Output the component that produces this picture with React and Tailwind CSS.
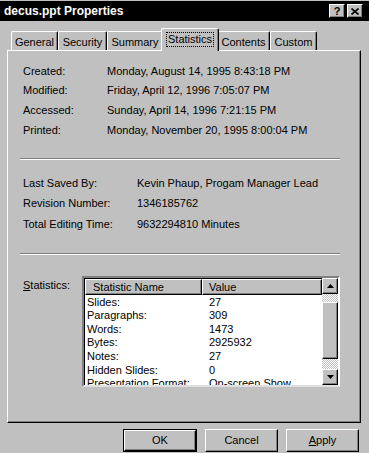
const raised =
  "border-t border-l border-r border-b border-t-white border-l-white border-r-black border-b-black shadow-[inset_-1px_-1px_0_#808080]";

function TitleBtn({ children }) {
  return (
    <div className={`w-[16px] h-[14px] bg-[#c0c0c0] flex items-center justify-center ${raised}`}>
      {children}
    </div>
  );
}

function Tab({ label, width, selected }) {
  if (selected) {
    return (
      <div
        className="relative z-10 -mx-[2px] -mb-[1px] h-[23px] bg-[#c0c0c0] border-t border-l border-r border-t-white border-l-white border-r-black rounded-t-[2px] shadow-[inset_-1px_0_0_#808080] flex items-start justify-center pt-[4px]"
        style={{ width: width + 4 }}
      >
        <span className="outline outline-1 outline-dotted outline-black px-[1px] leading-[13px]">{label}</span>
      </div>
    );
  }
  return (
    <div
      className="h-[19px] bg-[#c0c0c0] border-t border-l border-r border-t-white border-l-white border-r-black rounded-t-[2px] shadow-[inset_-1px_0_0_#808080] flex items-start justify-center pt-[4px]"
      style={{ width }}
    >
      <span className="leading-[13px]">{label}</span>
    </div>
  );
}

function Row({ label, value, labelW, h }) {
  return (
    <div className="flex items-center" style={{ height: h }}>
      <div style={{ width: labelW }}>{label}</div>
      <div>{value}</div>
    </div>
  );
}

function Separator() {
  return <div className="ml-[12px] w-[320px] h-[2px] border-t border-t-[#808080] border-b border-b-white" />;
}

function Arrow({ up }) {
  return (
    <svg width="7" height="4" viewBox="0 0 7 4">
      {up ? <polygon points="3.5,0 7,4 0,4" fill="#000" /> : <polygon points="0,0 7,0 3.5,4" fill="#000" />}
    </svg>
  );
}

function Button({ children, primary }) {
  const inner = (
    <div className={`w-full h-full bg-[#c0c0c0] flex items-center justify-center ${raised}`}>{children}</div>
  );
  if (primary) {
    return <div className="w-[74px] h-[23px] border border-black">{inner}</div>;
  }
  return <div className="w-[73px] h-[23px]">{inner}</div>;
}

const stats = [
  ["Slides:", "27"],
  ["Paragraphs:", "309"],
  ["Words:", "1473"],
  ["Bytes:", "2925932"],
  ["Notes:", "27"],
  ["Hidden Slides:", "0"],
  ["Presentation Format:", "On-screen Show"],
];

export default function App() {
  return (
    <div className="w-[369px] h-[453px] bg-[#c0c0c0] overflow-hidden text-black text-[11px] font-['Liberation_Sans',Arial,sans-serif]">
      {/* title bar */}
      <div className="mt-[1px] h-[20px] bg-black flex items-center justify-between pl-[4px] pr-[6px]">
        <span className="text-white font-bold text-[12px] leading-none">decus.ppt Properties</span>
        <div className="flex gap-[2px]">
          <TitleBtn>
            <span className="font-bold text-[11px] leading-none">?</span>
          </TitleBtn>
          <TitleBtn>
            <svg width="8" height="7" viewBox="0 0 8 7">
              <path d="M0.5 0.5 L7.5 6.5 M7.5 0.5 L0.5 6.5" stroke="#000" strokeWidth="1.6" />
            </svg>
          </TitleBtn>
        </div>
      </div>

      {/* tabs */}
      <div className="mt-[7px] h-[22px] flex items-end pl-[11px]">
        <Tab label="General" width={47} />
        <Tab label="Security" width={49} />
        <Tab label="Summary" width={56} />
        <Tab label="Statistics" width={54} selected />
        <Tab label="Contents" width={53} />
        <Tab label="Custom" width={47} />
      </div>

      {/* panel */}
      <div className="ml-[7px] w-[354px] h-[373px] border-t border-l border-r border-b border-t-white border-l-white border-r-black border-b-black shadow-[inset_-1px_-1px_0_#808080]">
        <div className="pt-[10px] pl-[15px]">
          <Row label="Created:" value="Monday, August 14, 1995 8:43:18 PM" labelW={84} h={19.7} />
          <Row label="Modified:" value="Friday, April 12, 1996 7:05:07 PM" labelW={84} h={19.7} />
          <Row label="Accessed:" value="Sunday, April 14, 1996 7:21:15 PM" labelW={84} h={19.7} />
          <Row label="Printed:" value="Monday, November 20, 1995 8:00:04 PM" labelW={84} h={19.7} />
        </div>
        <div className="mt-[18px]">
          <Separator />
        </div>
        <div className="mt-[13px] pl-[15px]">
          <Row label="Last Saved By:" value="Kevin Phaup, Progam Manager Lead" labelW={114} h={20.5} />
          <Row label="Revision Number:" value="1346185762" labelW={114} h={20.5} />
          <Row label="Total Editing Time:" value="9632294810 Minutes" labelW={114} h={20.5} />
        </div>
        <div className="mt-[19px]">
          <Separator />
        </div>

        <div className="mt-[21px] flex pl-[15px]">
          <div className="w-[59px] pt-[1px]">
            <span className="underline">S</span>tatistics:
          </div>
          <div className="w-[258px] h-[111px] border-2 border-t-[#808080] border-l-[#808080] border-r-white border-b-[#dfdfdf] shadow-[inset_1px_1px_0_#000] flex bg-white">
            <div className="w-[238px] flex flex-col pl-[1px] pt-[1px] overflow-hidden">
              <div className="flex h-[16px] shrink-0">
                <div className={`w-[117px] h-full bg-[#c0c0c0] pl-[7px] flex items-center ${raised}`}>Statistic Name</div>
                <div className={`w-[120px] h-full bg-[#c0c0c0] pl-[6px] flex items-center ${raised}`}>Value</div>
              </div>
              {stats.map(([name, val]) => (
                <div key={name} className="flex h-[13.6px] shrink-0 items-center leading-[13px]">
                  <div className="w-[117px] pl-[2px] whitespace-nowrap">{name}</div>
                  <div className="pl-[7px] whitespace-nowrap">{val}</div>
                </div>
              ))}
            </div>
            <div className="w-[16px] flex flex-col">
              <div className={`h-[16px] shrink-0 bg-[#c0c0c0] flex items-center justify-center ${raised}`}>
                <Arrow up />
              </div>
              <div className="h-[8px] shrink-0 bg-[repeating-conic-gradient(#ffffff_0_25%,#c0c0c0_0_50%)] bg-[length:2px_2px]" />
              <div className={`h-[57px] shrink-0 bg-[#c0c0c0] ${raised}`} />
              <div className="flex-1 bg-[repeating-conic-gradient(#ffffff_0_25%,#c0c0c0_0_50%)] bg-[length:2px_2px]" />
              <div className={`h-[16px] shrink-0 bg-[#c0c0c0] flex items-center justify-center ${raised}`}>
                <Arrow />
              </div>
            </div>
          </div>
        </div>
      </div>

      {/* buttons */}
      <div className="mt-[6px] flex pl-[123px] gap-[8px]">
        <Button primary>OK</Button>
        <Button>Cancel</Button>
        <Button>
          <span>
            <span className="underline">A</span>pply
          </span>
        </Button>
      </div>
    </div>
  );
}
